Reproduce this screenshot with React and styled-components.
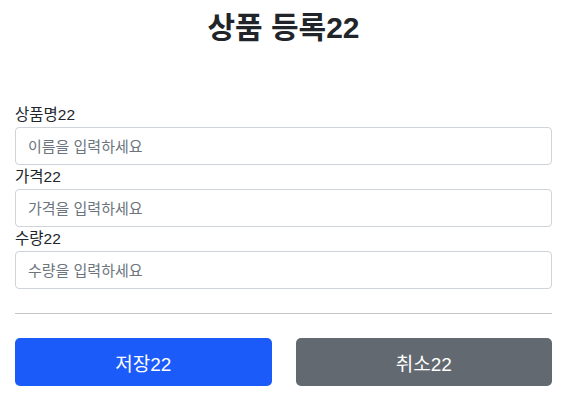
import React from 'react';
import styled, { createGlobalStyle } from 'styled-components';

const GlobalStyle = createGlobalStyle`
  body {
    margin: 0;
    background: #fff;
    color: #212529;
    font-family: "Liberation Sans", "Noto Sans CJK KR", sans-serif;
  }
`;

const Container = styled.div`
  padding: 0 15px;
`;

const Header = styled.div`
  text-align: center;
  padding-top: 10px;
  margin-bottom: 57px;
`;

const Title = styled.h2`
  margin: 0;
  font-size: 30px;
  line-height: 36px;
  font-weight: 700;
`;

const Field = styled.div``;

const Label = styled.label`
  display: block;
  font-size: 15.5px;
  line-height: 24px;
  height: 24px;
`;

const Input = styled.input`
  display: block;
  box-sizing: border-box;
  width: 100%;
  height: 38px;
  padding: 0 12px;
  font-family: inherit;
  font-size: 15px;
  color: #212529;
  border: 1px solid #ced4da;
  border-radius: 4px;
  outline: none;

  &::placeholder {
    color: #6c757d;
  }
`;

const Divider = styled.hr`
  margin: 24px 0;
  border: 0;
  border-top: 1px solid #c4c4c4;
`;

const ButtonRow = styled.div`
  display: grid;
  grid-template-columns: 1fr 1fr;
  column-gap: 24px;
`;

const Button = styled.button`
  height: 48px;
  border: 0;
  border-radius: 5px;
  font-family: inherit;
  font-size: 19px;
  color: #fff;
  background: ${(p) => (p.variant === 'primary' ? '#1b5bfa' : '#626970')};
  cursor: pointer;
`;

const fields = [
  { id: 'itemName', label: '상품명22', placeholder: '이름을 입력하세요' },
  { id: 'price', label: '가격22', placeholder: '가격을 입력하세요' },
  { id: 'quantity', label: '수량22', placeholder: '수량을 입력하세요' },
];

const App = () => {
  return (
    <>
      <GlobalStyle />
      <Container>
        <Header>
          <Title>상품 등록22</Title>
        </Header>
        <form>
          {fields.map((f) => (
            <Field key={f.id}>
              <Label htmlFor={f.id}>{f.label}</Label>
              <Input id={f.id} placeholder={f.placeholder} />
            </Field>
          ))}
          <Divider />
          <ButtonRow>
            <Button type="button" variant="primary">저장22</Button>
            <Button type="button">취소22</Button>
          </ButtonRow>
        </form>
      </Container>
    </>
  );
};

export default App;
